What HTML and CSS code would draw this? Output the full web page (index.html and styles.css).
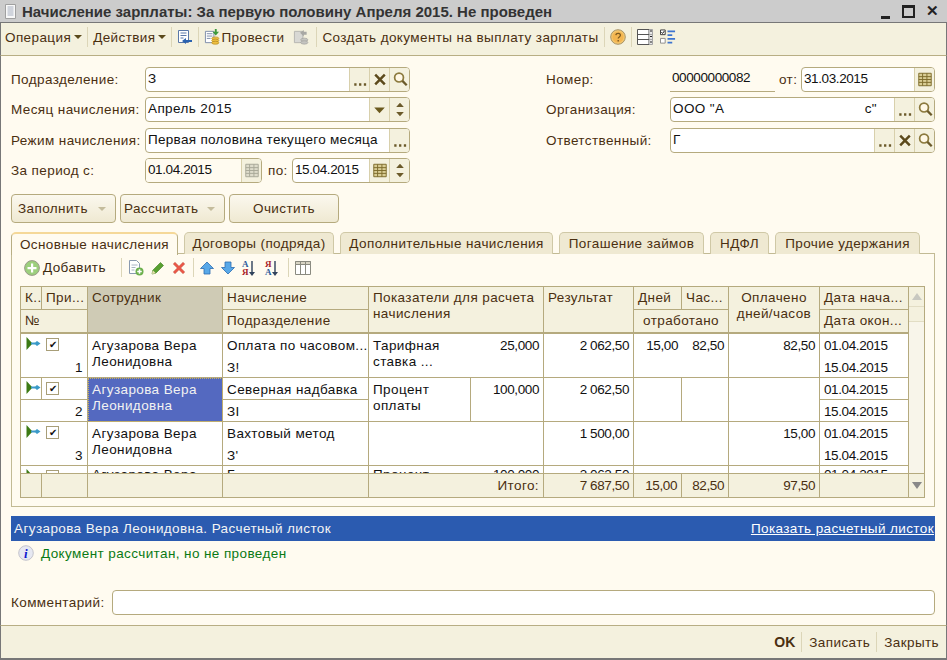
FILE: index.html
```html
<!DOCTYPE html>
<html lang="ru">
<head>
    <meta charset="UTF-8">
    <title>Начисление зарплаты</title>
    <link rel="stylesheet" href="styles.css">
</head>
<body>
    <svg class="defs" xmlns="http://www.w3.org/2000/svg">
        <symbol id="i-dots" viewBox="0 0 20 24"><path d="M4 16h2.400v2.400H4zM9 16h2.400v2.400H9zM14 16h2.400v2.400H14z" fill="#6b5a2a"/></symbol>
        <symbol id="i-clear" viewBox="0 0 20 24"><path d="M5 7l10 10M15 7L5 17" stroke="#5c4a1c" stroke-width="2.600" fill="none"/></symbol>
        <symbol id="i-search" viewBox="0 0 20 24"><circle cx="9" cy="10" r="4.600" fill="#fff8e6" stroke="#8c7a3e" stroke-width="1.800"/><path d="M12.500 13.500l4.500 4.500" stroke="#6b5a2a" stroke-width="2.400"/></symbol>
        <symbol id="i-down" viewBox="0 0 20 24"><path d="M4 10h11l-5.500 6z" fill="#6b5a1e"/></symbol>
        <symbol id="i-spin" viewBox="0 0 20 24"><path d="M10 5l4 4.500H6zM10 19l-4-4.500h8z" fill="#6b5a2a"/></symbol>
        <symbol id="i-cal" viewBox="0 0 20 24"><path d="M3.500 5.500h13v13h-13z" fill="#d9cd94" stroke="#7d6c2c"/><path d="M3.500 9h13M3.500 12h13M3.500 15h13M7.500 5.500v13M12 5.500v13" stroke="#7d6c2c" fill="none"/></symbol>
        <symbol id="i-cal-off" viewBox="0 0 20 24"><path d="M3.500 5.500h13v13h-13z" fill="#dedccb" stroke="#a8a898"/><path d="M3.500 9h13M3.500 12h13M3.500 15h13M7.500 5.500v13M12 5.500v13" stroke="#a8a898" fill="none"/></symbol>
        <symbol id="i-doc-back" viewBox="0 0 16 16"><path d="M1.500 1.500h10v12h-10z" fill="#fff" stroke="#5a78a8"/><path d="M3.500 4h6M3.500 6.500h6M3.500 9h3" stroke="#5a78a8"/><path d="M5 12l4-3v2h6v2H9v2z" fill="#2a62b0"/></symbol>
        <symbol id="i-post" viewBox="0 0 16 17"><path d="M1 2.500h9v12H1z" fill="#fff" stroke="#7a8aa8"/><path d="M2.500 5h6M2.500 7.500h6M2.500 10h4" stroke="#7a8aa8"/><path d="M11 0v3H8.500l3.500 4 3.500-4H13V0z" fill="#3c9a3c"/><ellipse cx="11.500" cy="10" rx="3.800" ry="1.600" fill="#f0c040" stroke="#b08820" stroke-width=".7"/><ellipse cx="11.500" cy="12.300" rx="3.800" ry="1.600" fill="#f0c040" stroke="#b08820" stroke-width=".7"/><ellipse cx="11.500" cy="14.600" rx="3.800" ry="1.600" fill="#f0c040" stroke="#b08820" stroke-width=".7"/></symbol>
        <symbol id="i-unpost" viewBox="0 0 16 17"><path d="M1 2.500h9v12H1z" fill="#d8d8d4" stroke="#b4b4b0"/><path d="M7 4l4-3v2h3v3h-3v2z" fill="#a8a8a4"/><ellipse cx="11.500" cy="11.500" rx="3.800" ry="1.800" fill="#c4c4c0" stroke="#a0a09c" stroke-width=".7"/><ellipse cx="11.500" cy="14.300" rx="3.800" ry="1.800" fill="#c4c4c0" stroke="#a0a09c" stroke-width=".7"/></symbol>
        <symbol id="i-help" viewBox="0 0 16 16"><circle cx="8" cy="8" r="7.300" fill="#f5c76e" stroke="#a89468"/><circle cx="8" cy="8" r="5.600" fill="#f3b550"/><path d="M5.800 6.200c.3-2.400 4.600-2.400 4.600.1 0 1.600-2.200 1.700-2.200 3.300" stroke="#7c5a20" stroke-width="1.300" fill="none"/><path d="M7.500 11h1.400v1.400H7.500z" fill="#7c5a20"/></symbol>
        <symbol id="i-rows" viewBox="0 0 16 16"><path d="M.5 .5h15v15H.5z" fill="#fff" stroke="#555"/><path d="M.5 5.500h15M.5 10.500h15M12 .5v15" stroke="#555" fill="none"/><path d="M12 0h4v16h-4z" fill="#d8d8d8" opacity=".6"/><path d="M13 2h2M13 7.500h2M13 13h2" stroke="#222"/></symbol>
        <symbol id="i-checks" viewBox="0 0 17 16"><path d="M.5 .5h5v5h-5z" fill="#fff" stroke="#333"/><path d="M1.500 3l1.200 1.200L4.500 1.800" stroke="#000" fill="none"/><path d="M.5 9.500h5v5h-5z" fill="#fff" stroke="#8a8a8a"/><path d="M8 1h8v2H8zM8 5h5v2H8zM8 9h8v2H8zM8 13h5v2H8z" fill="#3c74d0"/></symbol>
        <symbol id="i-doc" viewBox="0 0 11 15"><path d="M.5 .5h10v14H.5z" fill="#f8f8f8" stroke="#a0a0a0"/><path d="M2.500 3h6M2.500 5h6M2.500 7h6M2.500 9h6M2.500 11h6" stroke="#a8b0c0"/></symbol>
        <symbol id="i-add" viewBox="0 0 16 16"><circle cx="8" cy="8" r="7.400" fill="#9ccf7c" stroke="#9a9a8a"/><path d="M7 3.500h2.200V7h3.300v2.200H9.200v3.300H7V9.200H3.500V7H7z" fill="#fff"/></symbol>
        <symbol id="i-copy" viewBox="0 0 16 16"><path d="M1.500 .5h7l3 3v10h-10z" fill="#fff" stroke="#8a9ab0"/><path d="M3.500 5h6M3.500 7.500h4M3.500 10h3" stroke="#a8b4c4"/><circle cx="11.500" cy="11.500" r="4" fill="#6cb04c"/><path d="M10.700 9.300h1.600v1.500h1.500v1.500h-1.500v1.500h-1.600v-1.500H9.200v-1.500h1.500z" fill="#fff"/></symbol>
        <symbol id="i-edit" viewBox="0 0 14 14"><path d="M1 13l.8-3.800L9.500 1.500l3 3-7.700 7.700z" fill="#58a030" stroke="#3a7a20" stroke-width=".6"/><path d="M1 13l.8-3.800 3 3z" fill="#e8e0b0"/></symbol>
        <symbol id="i-del" viewBox="0 0 14 14"><path d="M1 3l2-2 4 4 4-4 2 2-4 4 4 4-2 2-4-4-4 4-2-2 4-4z" fill="#e85848" stroke="#d8a090" stroke-width=".6"/></symbol>
        <symbol id="i-up" viewBox="0 0 14 14"><path d="M7 1l6.500 6.500H10V13H4V7.500H.5z" fill="#58a8e8" stroke="#2c6cb0" stroke-width=".8"/></symbol>
        <symbol id="i-dn" viewBox="0 0 14 14"><path d="M7 13L.5 6.500H4V1h6v5.500h3.500z" fill="#58a8e8" stroke="#2c6cb0" stroke-width=".8"/></symbol>
        <symbol id="i-arrow-d" viewBox="0 0 6 16"><path d="M2.300 1h1.400v11H6l-3 4-3-4h2.300z" fill="#30425c"/></symbol>
        <symbol id="i-cols" viewBox="0 0 16 14"><path d="M.5 .5h15v13H.5z" fill="#fff" stroke="#8a8a80"/><path d="M.5 .5h15v3H.5z" fill="#d8d4c4" stroke="#8a8a80"/><path d="M5.500 .5v13M10.500 .5v13" stroke="#8a8a80"/></symbol>
        <symbol id="i-move" viewBox="0 0 15 13"><path d="M.5 0l6 6.500-6 6.500z" fill="#3c7a14"/><path d="M5 5.500h4V7.500H5z" fill="#3a9ac8"/><path d="M8 6.500l3-2.500 3.500 2.500L11 9z" fill="#3a9ac8"/></symbol>
        <symbol id="i-info" viewBox="0 0 16 16"><circle cx="8" cy="8" r="7.300" fill="#e6e8f2" stroke="#c4c4cc"/><text x="8" y="12.500" text-anchor="middle" font-family="Liberation Serif" font-style="italic" font-weight="700" font-size="13" fill="#1018d0">i</text></symbol>
    </svg>

    <div class="window">
        <div class="titlebar">
            <svg class="title-icon"><use href="#i-doc"/></svg>
            <span class="title-text">Начисление зарплаты: За первую половину Апреля 2015. Не проведен</span>
            <span class="win-min"></span>
            <span class="win-max"></span>
            <span class="win-close">✕</span>
        </div>

        <div class="toolbar">
            <span>Операция</span><i class="caret"></i><b class="sep"></b>
            <span>Действия</span><i class="caret"></i><b class="sep"></b>
            <svg class="ico16"><use href="#i-doc-back"/></svg><b class="sep"></b>
            <svg class="ico16"><use href="#i-post"/></svg><span class="post-label">Провести</span>
            <svg class="ico16 post-off"><use href="#i-unpost"/></svg><b class="sep"></b>
            <span>Создать документы на выплату зарплаты</span><b class="sep"></b>
            <svg class="ico16"><use href="#i-help"/></svg><b class="sep"></b>
            <svg class="ico16"><use href="#i-rows"/></svg>
            <svg class="ico16 checks"><use href="#i-checks"/></svg>
        </div>

        <div class="content">
            <div class="form">
                <div class="form-col col-left">
                    <div class="form-row">
                        <label>Подразделение:</label>
                        <div class="field f-full">
                            <span class="value">З</span>
                            <span class="btn"><svg><use href="#i-dots"/></svg></span>
                            <span class="btn"><svg><use href="#i-clear"/></svg></span>
                            <span class="btn"><svg><use href="#i-search"/></svg></span>
                        </div>
                    </div>
                    <div class="form-row">
                        <label>Месяц начисления:</label>
                        <div class="field f-full">
                            <span class="value">Апрель 2015</span>
                            <span class="btn"><svg><use href="#i-down"/></svg></span>
                            <span class="btn"><svg><use href="#i-spin"/></svg></span>
                        </div>
                    </div>
                    <div class="form-row row-next">
                        <label>Режим начисления:</label>
                        <div class="field f-full">
                            <span class="value value-long">Первая половина текущего месяца</span>
                            <span class="btn"><svg><use href="#i-dots"/></svg></span>
                        </div>
                    </div>
                    <div class="form-row">
                        <label>За период с:</label>
                        <div class="field f-date1">
                            <span class="value value-off digits">01.04.2015</span>
                            <span class="btn"><svg><use href="#i-cal-off"/></svg></span>
                        </div>
                        <span class="label-inline po">по:</span>
                        <div class="field f-date2">
                            <span class="value digits">15.04.2015</span>
                            <span class="btn"><svg><use href="#i-cal"/></svg></span>
                            <span class="btn"><svg><use href="#i-spin"/></svg></span>
                        </div>
                    </div>
                </div>

                <div class="form-col col-right">
                    <div class="form-row">
                        <label>Номер:</label>
                        <div class="number digits">00000000082</div>
                        <span class="label-inline ot">от:</span>
                        <div class="field f-date3">
                            <span class="value digits">31.03.2015</span>
                            <span class="btn"><svg><use href="#i-cal"/></svg></span>
                        </div>
                    </div>
                    <div class="form-row">
                        <label>Организация:</label>
                        <div class="field f-full">
                            <span class="value">ООО "А<em>с"</em></span>
                            <span class="btn"><svg><use href="#i-dots"/></svg></span>
                            <span class="btn"><svg><use href="#i-search"/></svg></span>
                        </div>
                    </div>
                    <div class="form-row row-next">
                        <label>Ответственный:</label>
                        <div class="field f-full">
                            <span class="value">Г</span>
                            <span class="btn"><svg><use href="#i-dots"/></svg></span>
                            <span class="btn"><svg><use href="#i-clear"/></svg></span>
                            <span class="btn"><svg><use href="#i-search"/></svg></span>
                        </div>
                    </div>
                </div>
            </div>

            <div class="actions">
                <div class="action a-menu">Заполнить<i class="caret caret-off"></i></div>
                <div class="action a-menu a-calc">Рассчитать<i class="caret caret-off"></i></div>
                <div class="action a-clear">Очистить</div>
            </div>

            <div class="tabs">
                <div class="tab tab-active t1">Основные начисления</div>
                <div class="tab t2">Договоры (подряда)</div>
                <div class="tab t3">Дополнительные начисления</div>
                <div class="tab t4">Погашение займов</div>
                <div class="tab t5">НДФЛ</div>
                <div class="tab t6">Прочие удержания</div>
            </div>

            <div class="panel">
                <div class="panel-tools">
                    <svg class="ico16"><use href="#i-add"/></svg>
                    <span class="add-label"><u>Д</u>обавить</span>
                    <b class="sep"></b>
                    <svg class="ico16"><use href="#i-copy"/></svg>
                    <svg class="ico14"><use href="#i-edit"/></svg>
                    <svg class="ico14"><use href="#i-del"/></svg>
                    <b class="sep"></b>
                    <svg class="ico14"><use href="#i-up"/></svg>
                    <svg class="ico14"><use href="#i-dn"/></svg>
                    <span class="sort"><span class="sort-az"><span class="blue">А</span><span class="red">Я</span></span><svg class="sort-arrow"><use href="#i-arrow-d"/></svg></span>
                    <span class="sort"><span class="sort-az"><span class="red">Я</span><span class="blue">А</span></span><svg class="sort-arrow"><use href="#i-arrow-d"/></svg></span>
                    <b class="sep"></b>
                    <svg class="ico16"><use href="#i-cols"/></svg>
                </div>

                <div class="table">
                    <div class="table-main">
                        <div class="grid grid-head">
                            <div class="c c-k">К..</div>
                            <div class="c c-pr">При...</div>
                            <div class="c c-emp c-tall c-sorted">Сотрудник</div>
                            <div class="c c-nach">Начисление</div>
                            <div class="c c-pok c-tall">Показатели для расчета начисления</div>
                            <div class="c c-res c-tall">Результат</div>
                            <div class="c c-dn">Дней</div>
                            <div class="c c-ch">Час...</div>
                            <div class="c c-opl c-tall center">Оплачено дней/часов</div>
                            <div class="c c-dt">Дата нача...</div>
                            <div class="c c-num-head">№</div>
                            <div class="c c-nach">Подразделение</div>
                            <div class="c c-worked center">отработано</div>
                            <div class="c c-dt">Дата окон...</div>
                        </div>

                        <div class="table-body">
                            <div class="grid grid-row">
                                <div class="c c-flag c-tall"><svg class="move"><use href="#i-move"/></svg><span class="check">✔</span><span class="num">1</span></div>
                                <div class="c c-emp c-tall">Агузарова Вера Леонидовна</div>
                                <div class="c c-nach c-tall c-pair"><span>Оплата по часовом...</span><span>З!</span></div>
                                <div class="c c-pok c-tall c-rate"><span class="rate-name">Тарифная ставка ...</span><span class="digits">25,000</span></div>
                                <div class="c c-res c-tall right digits">2 062,50</div>
                                <div class="c c-worked c-tall c-hours digits"><span>15,00</span><span>82,50</span></div>
                                <div class="c c-opl c-tall right digits">82,50</div>
                                <div class="c c-dt c-tall c-pair digits"><span>01.04.2015</span><span>15.04.2015</span></div>
                            </div>

                            <div class="grid grid-row">
                                <div class="c c-k c-flag2"><svg class="move"><use href="#i-move"/></svg></div>
                                <div class="c c-pr c-flag2"><span class="check">✔</span></div>
                                <div class="c c-emp c-tall c-selected">Агузарова Вера Леонидовна</div>
                                <div class="c c-nach">Северная надбавка</div>
                                <div class="c c-pok1 c-tall">Процент оплаты</div>
                                <div class="c c-pok2 c-tall right digits">100,000</div>
                                <div class="c c-res c-tall right digits">2 062,50</div>
                                <div class="c c-dn c-tall"></div>
                                <div class="c c-ch c-tall"></div>
                                <div class="c c-opl c-tall"></div>
                                <div class="c c-dt digits">01.04.2015</div>
                                <div class="c c-num-head right">2</div>
                                <div class="c c-nach">ЗІ</div>
                                <div class="c c-dt digits">15.04.2015</div>
                            </div>

                            <div class="grid grid-row">
                                <div class="c c-flag c-tall"><svg class="move"><use href="#i-move"/></svg><span class="check">✔</span><span class="num">3</span></div>
                                <div class="c c-emp c-tall">Агузарова Вера Леонидовна</div>
                                <div class="c c-nach c-tall c-pair"><span>Вахтовый метод</span><span>З'</span></div>
                                <div class="c c-pok c-tall"></div>
                                <div class="c c-res c-tall right digits">1 500,00</div>
                                <div class="c c-worked c-tall"></div>
                                <div class="c c-opl c-tall right digits">15,00</div>
                                <div class="c c-dt c-tall c-pair digits"><span>01.04.2015</span><span>15.04.2015</span></div>
                            </div>

                            <div class="grid grid-row row-cut">
                                <div class="c c-flag c-tall"><svg class="move"><use href="#i-move"/></svg><span class="check">✔</span></div>
                                <div class="c c-emp c-tall">Агузарова Вера</div>
                                <div class="c c-nach c-tall">Б</div>
                                <div class="c c-pok c-tall c-rate"><span class="rate-name">Процент</span><span class="digits">100,000</span></div>
                                <div class="c c-res c-tall right digits">3 062,50</div>
                                <div class="c c-worked c-tall"></div>
                                <div class="c c-opl c-tall"></div>
                                <div class="c c-dt c-tall digits">01.04.2015</div>
                            </div>
                        </div>

                        <div class="grid grid-foot">
                            <div class="c"></div>
                            <div class="c"></div>
                            <div class="c"></div>
                            <div class="c"></div>
                            <div class="c right">Итого:</div>
                            <div class="c right digits">7 687,50</div>
                            <div class="c right digits">15,00</div>
                            <div class="c right digits">82,50</div>
                            <div class="c right digits">97,50</div>
                            <div class="c"></div>
                        </div>
                    </div>

                    <div class="scrollbar">
                        <div class="sb-btn"><i class="sb-up"></i></div>
                        <div class="sb-thumb"></div>
                        <div class="sb-track"></div>
                        <div class="sb-btn sb-end"><i class="sb-down"></i></div>
                    </div>
                </div>
            </div>

            <div class="bluebar">
                <span>Агузарова Вера Леонидовна. Расчетный листок</span>
                <a>Показать расчетный листок</a>
            </div>

            <div class="message">
                <svg class="ico16"><use href="#i-info"/></svg>
                <span>Документ рассчитан, но не проведен</span>
            </div>

            <div class="comment">
                <label>Комментарий:</label>
                <div class="field f-comment"></div>
            </div>
        </div>

        <div class="footer">
            <b>OK</b><i class="foot-sep"></i><span>Записать</span><i class="foot-sep"></i><span>Закрыть</span>
        </div>
    </div>
</body>
</html>
```

FILE: styles.css
```css
* {
    margin: 0;
    padding: 0;
    box-sizing: border-box;
}

html, body {
    height: 100%;
    overflow: hidden;
}

body {
    font-family: "Liberation Sans", Arial, sans-serif;
    font-size: 13.5px;
    letter-spacing: 0.4px;
    color: #4a2f10;
    background: #fffbf0;
}

.defs {
    display: none;
}

svg {
    display: block;
}

.digits {
    letter-spacing: -0.4px;
}

.window {
    width: 947px;
    height: 660px;
    display: flex;
    flex-direction: column;
}

/* заголовок окна */
.titlebar {
    height: 23px;
    background: #cccccc;
    border-bottom: 1px solid #777;
    display: flex;
    align-items: center;
    flex-shrink: 0;
    position: relative;
}

.title-icon {
    width: 11px;
    height: 15px;
    margin-left: 5px;
}

.title-text {
    margin-left: 6px;
    font-size: 15px;
    font-weight: bold;
    letter-spacing: 0;
    color: #333;
    flex: 1;
}

.win-min {
    width: 9px;
    height: 3px;
    background: #222;
    margin: 12px 12px 0 0;
}

.win-max {
    width: 13px;
    height: 13px;
    border: 2px solid #222;
    border-top-width: 3px;
    margin-right: 11px;
}

.win-close {
    width: 15px;
    margin-right: 6px;
    font-size: 15px;
    font-weight: bold;
    color: #222;
    letter-spacing: 0;
}

/* панель команд */
.toolbar {
    height: 33px;
    background: #f4f1de;
    border-bottom: 1px solid #b8ae84;
    border-left: 1px solid #777;
    border-right: 1px solid #777;
    padding: 0 0 4px 4px;
    display: flex;
    align-items: center;
    flex-shrink: 0;
}

.caret {
    width: 0;
    height: 0;
    border: 4px solid transparent;
    border-top: 4px solid #5a4a1c;
    border-bottom: 0;
    margin-left: 3px;
}

.caret-off {
    border-top-color: #c4bc9c;
}

.sep {
    width: 1px;
    height: 20px;
    background: #dcd6b8;
    margin: 0 5px;
}

.ico16 {
    width: 16px;
    height: 16px;
    flex-shrink: 0;
}

.ico14 {
    width: 14px;
    height: 14px;
    flex-shrink: 0;
}

.post-label {
    margin: 0 9px 0 1px;
}

.post-off {
    margin-right: 2px;
}

.checks {
    margin-left: 7px;
}

.content {
    flex: 1;
    border-left: 1px solid #777;
    border-right: 1px solid #777;
    padding: 11px 11px 0 10px;
}

/* реквизиты документа */
.form {
    display: flex;
}

.form-col {
    display: flex;
    flex-direction: column;
    gap: 5px;
}

.col-left {
    width: 399px;
}

.col-right {
    margin-left: 136px;
    width: 389px;
}

.form-row {
    display: flex;
    align-items: center;
    height: 25px;
}

.row-next {
    margin-top: 1px;
}

.form-row label {
    flex-shrink: 0;
}

.col-left label {
    width: 134px;
}

.col-right label {
    width: 124px;
}

.field {
    height: 25px;
    background: #fff;
    border: 1px solid #b5aa7e;
    border-radius: 4px;
    display: flex;
    color: #111;
    overflow: hidden;
}

.f-full {
    flex: 1;
}

.f-date1 {
    width: 117px;
}

.f-date2 {
    width: 118px;
}

.f-date3 {
    width: 134px;
}

.f-comment {
    flex: 1;
}

.value {
    flex: 1;
    line-height: 21px;
    padding-left: 2px;
    display: flex;
    justify-content: space-between;
    padding-right: 17px;
    white-space: nowrap;
    overflow: hidden;
}

.value-long {
    letter-spacing: 0.3px;
    padding-right: 0;
}

.value em {
    font-style: normal;
}

.value-off {
    background: #fffbf0;
}

.btn {
    width: 20px;
    flex-shrink: 0;
    background: #f4f1de;
    border-left: 1px solid #d8d0ac;
}

.btn svg {
    width: 20px;
    height: 23px;
}

.label-inline {
    flex-shrink: 0;
}

.po {
    width: 30px;
    padding-left: 6px;
}

.number {
    width: 105px;
    height: 25px;
    border-bottom: 1px solid #b5aa7e;
    line-height: 21px;
    padding-left: 2px;
    color: #111;
}

.ot {
    width: 26px;
    padding-left: 4px;
}

/* кнопки */
.actions {
    display: flex;
    gap: 4px;
    margin-top: 11px;
}

.action {
    height: 29px;
    background: linear-gradient(#fbf8ee, #efe9d2);
    border: 1px solid #b5aa7e;
    border-radius: 4px;
    display: flex;
    align-items: center;
    justify-content: space-between;
}

.a-menu {
    width: 105px;
    padding: 0 9px 0 6px;
}

.a-calc {
    padding-left: 3px;
}

.a-clear {
    width: 110px;
    justify-content: center;
}

/* закладки */
.tabs {
    display: flex;
    margin-top: 8px;
    height: 23px;
    gap: 6px;
    position: relative;
    z-index: 1;
}

.tab {
    height: 22px;
    background: #efe9d2;
    border: 1px solid #cfc8a6;
    border-bottom: 0;
    border-radius: 5px 5px 0 0;
    text-align: center;
    line-height: 21px;
    margin-top: 1px;
    white-space: nowrap;
}

.t1 { width: 167px; }
.t2 { width: 150px; }
.t3 { width: 213px; }
.t4 { width: 145px; }
.t5 { width: 59px; }
.t6 { width: 145px; }

.tab-active {
    height: 23px;
    background: #fffbf0;
    border-color: #b8ae84;
    border-top: 2px solid #f5d898;
}

.panel {
    width: 924px;
    height: 254px;
    border: 1px solid #c2ba94;
    margin-top: -1px;
    padding: 1px 9px 0 8px;
}

.panel-tools {
    height: 25px;
    display: flex;
    align-items: center;
    padding-left: 4px;
    margin-bottom: 6px;
}

.panel-tools .ico16,
.panel-tools .ico14 {
    margin-right: 7px;
}

.panel-tools .sep {
    margin: 0 6px 0 15px;
    height: 19px;
}

.panel-tools .ico14 + .sep,
.panel-tools .sort + .sep {
    margin-left: 0;
}

.add-label {
    margin-left: -4px;
    color: #3c2a10;
}

.sort {
    display: flex;
    align-items: center;
    margin-right: 7px;
    width: 16px;
}

.sort-az {
    display: flex;
    flex-direction: column;
    font-family: "Liberation Serif", serif;
    font-size: 9px;
    font-weight: bold;
    line-height: 8px;
    letter-spacing: 0;
}

.blue {
    color: #2c5c9c;
}

.red {
    color: #a81c28;
}

.sort-arrow {
    width: 6px;
    height: 16px;
    margin-left: 1px;
}

/* таблица */
.table {
    display: flex;
    width: 905px;
    height: 212px;
    border: 1px solid #b5aa7e;
}

.table-main {
    width: 888px;
    border-right: 1px solid #b5aa7e;
    flex-shrink: 0;
}

.grid {
    display: grid;
    grid-template-columns: 21px 46px 135px 146px 102px 73px 90px 48px 47px 91px 89px;
}

.grid-head {
    grid-template-rows: 23px 23px;
    background: #f4f1de;
}

.grid-row {
    grid-template-rows: 22px 22px;
    height: 44px;
    background: #fff;
    color: #111;
}

.table-body {
    height: 140px;
    overflow: hidden;
    border-top: 1px solid #b5aa7e;
}

.grid-foot {
    height: 24px;
    background: #f4f1de;
    border-top: 1px solid #b5aa7e;
    grid-template-columns: 21px 46px 135px 146px 175px 90px 48px 47px 91px 89px;
}

.c {
    border-right: 1px solid #b5aa7e;
    border-bottom: 1px solid #b5aa7e;
    padding: 3px 4px;
    line-height: 16px;
    white-space: nowrap;
    overflow: hidden;
}

.grid-foot .c {
    border-bottom: 0;
    line-height: 17px;
}

.grid-row .c {
    padding-top: 4px;
}

/* строка обрезана нижней границей списка */
.grid-row.row-cut .c {
    padding-top: 1px;
}

.c-k { grid-column: 1; }
.c-pr { grid-column: 2; }
.c-emp { grid-column: 3; white-space: normal; }
.c-nach { grid-column: 4; }
.c-pok { grid-column: 5 / 7; white-space: normal; }
.c-pok1 { grid-column: 5; white-space: normal; }
.c-pok2 { grid-column: 6; }
.c-res { grid-column: 7; }
.c-dn { grid-column: 8; }
.c-ch { grid-column: 9; }
.c-opl { grid-column: 10; white-space: normal; }
.c-dt { grid-column: 11; border-right: 0; }
.c-num-head { grid-column: 1 / 3; }
.c-worked { grid-column: 8 / 10; }
.c-flag { grid-column: 1 / 3; position: relative; }
.c-tall { grid-row: span 2; }

.center {
    text-align: center;
}

.right {
    text-align: right;
}

.c-sorted {
    background: #cfcbb5;
}

.c-selected {
    background: #5469c0;
    color: #f2f2f2;
    outline: 1px dotted #c8b060;
    outline-offset: -1px;
}

.c-pair span {
    display: block;
    height: 22px;
}

.c-rate {
    display: flex;
    justify-content: space-between;
}

.rate-name {
    width: 75px;
    white-space: normal;
}

.c-hours {
    display: flex;
    padding-left: 0;
}

.c-hours span {
    flex: 1;
    text-align: right;
}

.c-hours span:first-child {
    flex: none;
    width: 44px;
}

.c-flag .move,
.c-flag2 .move {
    position: absolute;
    left: 5px;
    top: 3px;
    width: 15px;
    height: 13px;
}

.c-flag2 {
    position: relative;
}

.check {
    position: absolute;
    left: 25px;
    top: 4px;
    width: 13px;
    height: 13px;
    border: 1px solid #a89e78;
    background: #fff;
    font-size: 10px;
    line-height: 11px;
    text-align: center;
    letter-spacing: 0;
    color: #111;
}

.c-flag2 .check {
    left: 4px;
}

.num {
    position: absolute;
    right: 4px;
    bottom: 1px;
}

.scrollbar {
    flex: 1;
    display: flex;
    flex-direction: column;
    background: #f8f5ea;
}

.sb-btn {
    height: 20px;
    background: #f4f1de;
    border-bottom: 1px solid #e2ddc4;
    display: flex;
    align-items: center;
    justify-content: center;
}

.sb-thumb {
    height: 15px;
    background: #f4f1de;
    border-bottom: 1px solid #e2ddc4;
}

.sb-track {
    flex: 1;
}

.sb-end {
    height: 24px;
    border-top: 1px solid #b5aa7e;
    border-bottom: 0;
}

.sb-up {
    border: 5px solid transparent;
    border-bottom: 7px solid #c8c8c0;
    border-top: 0;
}

.sb-down {
    border: 5px solid transparent;
    border-top: 7px solid #888;
    border-bottom: 0;
}

/* нижняя часть */
.bluebar {
    width: 924px;
    height: 25px;
    margin-top: 9px;
    background: #2b5bb0;
    color: #f4f4f4;
    padding: 0 1px 0 3px;
    display: flex;
    align-items: center;
    justify-content: space-between;
}

.bluebar a {
    text-decoration: underline;
    color: #fff;
}

.message {
    display: flex;
    align-items: center;
    color: #0a7a14;
    height: 18px;
    margin-top: 3px;
    padding-left: 7px;
    gap: 7px;
}

.comment {
    display: flex;
    align-items: center;
    margin-top: 28px;
}

.comment label {
    width: 101px;
    flex-shrink: 0;
}

.footer {
    height: 35px;
    background: #f4f1de;
    border: 1px solid #777;
    border-top: 1px solid #b8ae84;
    border-bottom: 2px solid #777;
    display: flex;
    align-items: center;
    justify-content: flex-end;
    padding-right: 7px;
    flex-shrink: 0;
}

.footer b {
    font-size: 14px;
    letter-spacing: 0;
}

.foot-sep {
    width: 1px;
    height: 20px;
    background: #dcd6b8;
    margin: 0 7px 0 6px;
}
```
